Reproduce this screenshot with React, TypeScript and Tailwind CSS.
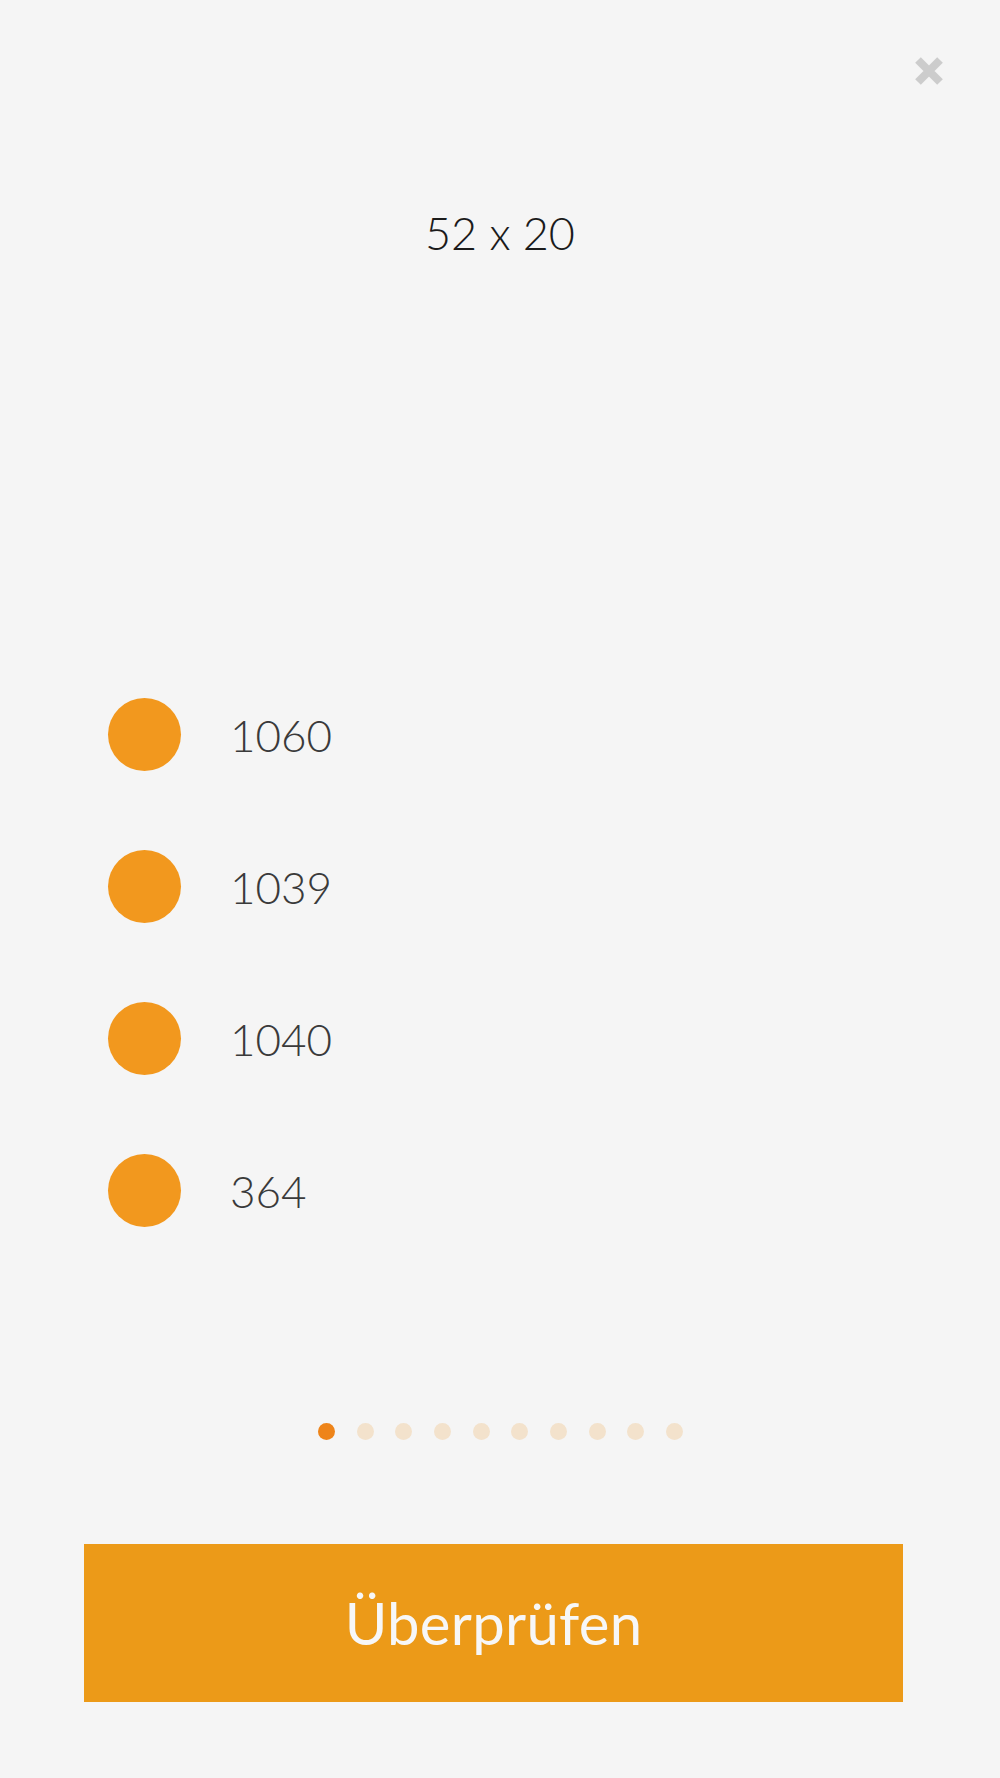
import React from 'react';

const values = ['1060', '1039', '1040', '364'];

const CloseIcon: React.FC = () => (
  <svg width="32" height="32" viewBox="0 0 32 32" aria-hidden="true">
    <path d="M5 5 L27 27 M27 5 L5 27" stroke="#cccccc" strokeWidth="8" strokeLinecap="butt" fill="none" />
  </svg>
);

const App: React.FC = () => {
  return (
    <div className="min-h-[1778px] w-full bg-[#f5f5f5] font-['Lato','Liberation_Sans',sans-serif]">
      {/* close */}
      <div className="flex justify-end pt-[55px] pr-[55px]">
        <button className="w-[32px] h-[32px]">
          <CloseIcon />
        </button>
      </div>

      {/* title */}
      <h1 className="mt-[124px] h-[48px] text-center text-[45px] leading-none font-light text-[#1b1b1b]">52 x 20</h1>

      {/* answers */}
      <div className="mt-[439px] flex flex-col gap-[79px] pl-[108px]">
        {values.map((v) => (
          <div key={v} className="flex items-center h-[73px]">
            <div className="w-[73px] h-[73px] rounded-full bg-[#f2981e]" />
            <span className="ml-[49px] text-[44px] leading-none font-light text-[#3a3a3a]">{v}</span>
          </div>
        ))}
      </div>

      {/* pager */}
      <div className="mt-[196px] flex justify-center gap-[21.7px] pl-[1px]">
        {Array.from({ length: 10 }).map((_, i) => (
          <div
            key={i}
            className={i === 0 ? 'w-[17px] h-[17px] rounded-full bg-[#ee8419]' : 'w-[17px] h-[17px] rounded-full bg-[#f3e2cc]'}
          />
        ))}
      </div>

      {/* submit */}
      <div className="mt-[104px] pl-[84px] pr-[97px]">
        <button className="w-full h-[158px] bg-[#ec9a18] text-[#f7f7f7] text-[58px] tracking-[0.3px] leading-none">Überprüfen</button>
      </div>
    </div>
  );
};

export default App;
